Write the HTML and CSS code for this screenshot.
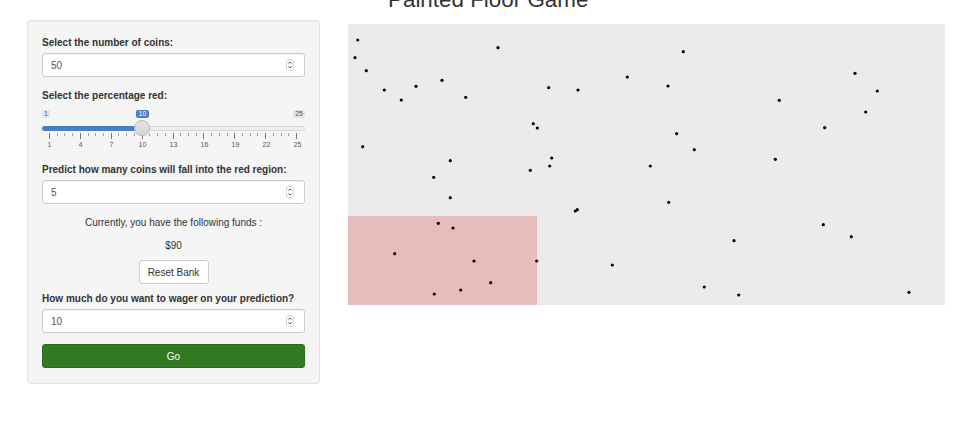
FILE: index.html
```html
<!DOCTYPE html>
<html lang="en">
<head>
<meta charset="utf-8">
<title>Painted Floor Game</title>
<link rel="stylesheet" href="styles.css">
</head>
<body>
<div class="page">
  <aside class="panel">
    <div class="group">
      <label class="lbl">Select the number of coins:</label>
      <div class="num"><span>50</span>
        <svg class="spin" width="8" height="12" viewBox="0 0 8 12"><rect x="0.5" y="0.5" width="7" height="11" rx="2" fill="#fbfbfb" stroke="#d6d6d6"/><path d="M2.3 4.6 L4 3 L5.7 4.6" fill="none" stroke="#555" stroke-width="0.9"/><path d="M2.3 7.4 L4 9 L5.7 7.4" fill="none" stroke="#555" stroke-width="0.9"/></svg>
      </div>
    </div>
    <div class="group">
      <label class="lbl">Select the percentage red:</label>
      <div class="slider">
        <div class="irs-minmax"><span class="irs-box">1</span><span class="irs-box">25</span></div>
        <span class="irs-single">10</span>
        <div class="irs-track"><div class="irs-bar"></div></div>
        <div class="irs-handle"></div>
        <div class="irs-ticks">
          <i class="maj"></i><i></i><i></i><i></i>
          <i class="maj"></i><i></i><i></i><i></i>
          <i class="maj"></i><i></i><i></i><i></i>
          <i class="maj"></i><i></i><i></i><i></i>
          <i class="maj"></i><i></i><i></i><i></i>
          <i class="maj"></i><i></i><i></i><i></i>
          <i class="maj"></i><i></i><i></i><i></i>
          <i class="maj"></i><i></i><i></i><i></i>
          <i class="maj"></i>
        </div>
        <div class="irs-labels"><span>1</span><span>4</span><span>7</span><span>10</span><span>13</span><span>16</span><span>19</span><span>22</span><span>25</span></div>
      </div>
    </div>
    <div class="group">
      <label class="lbl">Predict how many coins will fall into the red region:</label>
      <div class="num"><span>5</span>
        <svg class="spin" width="8" height="12" viewBox="0 0 8 12"><rect x="0.5" y="0.5" width="7" height="11" rx="2" fill="#fbfbfb" stroke="#d6d6d6"/><path d="M2.3 4.6 L4 3 L5.7 4.6" fill="none" stroke="#555" stroke-width="0.9"/><path d="M2.3 7.4 L4 9 L5.7 7.4" fill="none" stroke="#555" stroke-width="0.9"/></svg>
      </div>
    </div>
    <p class="funds">Currently, you have the following funds :</p>
    <p class="amount">$90</p>
    <div class="center"><button class="btn-reset" type="button">Reset Bank</button></div>
    <div class="group wager">
      <label class="lbl">How much do you want to wager on your prediction?</label>
      <div class="num"><span>10</span>
        <svg class="spin" width="8" height="12" viewBox="0 0 8 12"><rect x="0.5" y="0.5" width="7" height="11" rx="2" fill="#fbfbfb" stroke="#d6d6d6"/><path d="M2.3 4.6 L4 3 L5.7 4.6" fill="none" stroke="#555" stroke-width="0.9"/><path d="M2.3 7.4 L4 9 L5.7 7.4" fill="none" stroke="#555" stroke-width="0.9"/></svg>
      </div>
    </div>
    <button class="btn-go" type="button">Go</button>
  </aside>
  <main class="main">
    <h3 class="title">Painted Floor Game</h3>
    <div class="plot">
      <div class="red"></div>
      <svg class="coins" width="597" height="281" viewBox="0 0 597 281">
        <g fill="#000">
          <circle cx="9.7" cy="16" r="1.6"/>
          <circle cx="7" cy="33.7" r="1.6"/>
          <circle cx="18.3" cy="46.7" r="1.6"/>
          <circle cx="36.3" cy="66" r="1.6"/>
          <circle cx="53.3" cy="76" r="1.6"/>
          <circle cx="68" cy="62.3" r="1.6"/>
          <circle cx="94" cy="56.3" r="1.6"/>
          <circle cx="117.7" cy="73.3" r="1.6"/>
          <circle cx="150" cy="23.7" r="1.6"/>
          <circle cx="200.7" cy="63.7" r="1.6"/>
          <circle cx="230" cy="66" r="1.6"/>
          <circle cx="279.3" cy="53" r="1.6"/>
          <circle cx="185.3" cy="99.7" r="1.6"/>
          <circle cx="189.3" cy="104" r="1.6"/>
          <circle cx="14.7" cy="122.7" r="1.6"/>
          <circle cx="102.3" cy="136.7" r="1.6"/>
          <circle cx="203.7" cy="134" r="1.6"/>
          <circle cx="335.3" cy="27.7" r="1.6"/>
          <circle cx="320" cy="62" r="1.6"/>
          <circle cx="431.3" cy="76.3" r="1.6"/>
          <circle cx="507" cy="49.3" r="1.6"/>
          <circle cx="529.3" cy="67" r="1.6"/>
          <circle cx="517.7" cy="88" r="1.6"/>
          <circle cx="476.7" cy="103.7" r="1.6"/>
          <circle cx="328.7" cy="109.7" r="1.6"/>
          <circle cx="346.3" cy="125.7" r="1.6"/>
          <circle cx="427.3" cy="135.3" r="1.6"/>
          <circle cx="182.3" cy="146.3" r="1.6"/>
          <circle cx="201.7" cy="142" r="1.6"/>
          <circle cx="85.7" cy="153.3" r="1.6"/>
          <circle cx="102.3" cy="173.7" r="1.6"/>
          <circle cx="227.3" cy="187" r="1.6"/>
          <circle cx="229.3" cy="185.7" r="1.6"/>
          <circle cx="90.3" cy="199.3" r="1.6"/>
          <circle cx="105" cy="204" r="1.6"/>
          <circle cx="46.7" cy="229.7" r="1.6"/>
          <circle cx="126" cy="237" r="1.6"/>
          <circle cx="188.7" cy="237" r="1.6"/>
          <circle cx="142.7" cy="258.7" r="1.6"/>
          <circle cx="112.7" cy="266" r="1.6"/>
          <circle cx="86.3" cy="270" r="1.6"/>
          <circle cx="264.3" cy="241" r="1.6"/>
          <circle cx="302.3" cy="142" r="1.6"/>
          <circle cx="320.7" cy="178.3" r="1.6"/>
          <circle cx="386" cy="216.7" r="1.6"/>
          <circle cx="475.3" cy="200.7" r="1.6"/>
          <circle cx="503.3" cy="212.7" r="1.6"/>
          <circle cx="356.3" cy="263" r="1.6"/>
          <circle cx="390.7" cy="271" r="1.6"/>
          <circle cx="561" cy="268.3" r="1.6"/>
        </g>
      </svg>
    </div>
  </main>
</div>
</body>
</html>
```

FILE: styles.css
```css
* { box-sizing: border-box; }

body {
  margin: 0;
  background: #fff;
  color: #333;
  font-family: "Liberation Sans", Arial, Helvetica, sans-serif;
}

.page {
  display: flex;
  align-items: flex-start;
  gap: 28px;
  padding-left: 27px;
}

/* ---------- side panel ---------- */
.panel {
  flex: 0 0 293px;
  width: 293px;
  min-width: 0;
  margin-top: 20px;
  background: #f5f5f5;
  border: 1px solid #e3e3e3;
  border-radius: 3px;
  box-shadow: inset 0 1px 1px rgba(0, 0, 0, 0.04);
  padding: 15px 14px 15px;
}

.group { margin-bottom: 12px; }

.lbl {
  display: block;
  font-size: 10px;
  line-height: 14px;
  font-weight: bold;
  margin-bottom: 3px;
  color: #333;
}

.num {
  height: 24px;
  background: #fff;
  border: 1px solid #ccc;
  border-radius: 3px;
  box-shadow: inset 0 1px 1px rgba(0, 0, 0, 0.06);
  display: flex;
  align-items: center;
  justify-content: space-between;
  padding: 0 10px 0 8px;
  font-size: 10px;
  color: #555;
}

.spin { display: block; }

/* ---------- slider ---------- */
.slider {
  position: relative;
  height: 45px;
}

.irs-minmax {
  display: flex;
  justify-content: space-between;
  padding-top: 4px;
  height: 12px;
}

.irs-box {
  font-size: 7px;
  line-height: 8px;
  padding: 0 2px;
  background: #e4e4e4;
  color: #555;
  border-radius: 2px;
}

.irs-single {
  position: absolute;
  left: 94px;
  top: 4px;
  width: 13px;
  text-align: center;
  font-size: 7px;
  line-height: 8px;
  background: #4a80c2;
  color: #fff;
  border-radius: 2px;
}

.irs-track {
  position: relative;
  margin-top: 8px;
  height: 5px;
  background: #eee;
  border: 1px solid #d8d8d8;
  border-radius: 3px;
}

.irs-bar {
  position: absolute;
  left: -1px;
  top: -1px;
  width: 101px;
  height: 5px;
  background: #4a80c2;
  border-radius: 3px 0 0 3px;
}

.irs-handle {
  position: absolute;
  left: 92px;
  top: 14px;
  width: 16px;
  height: 16px;
  border-radius: 50%;
  background: linear-gradient(#e4e4e4, #d6d6d6);
  border: 1px solid #b9b9b9;
}

.irs-ticks {
  display: flex;
  justify-content: space-between;
  align-items: flex-start;
  margin: 2px 0 0 7px;
  width: 248px;
  height: 6px;
}

.irs-ticks i {
  display: block;
  width: 1px;
  height: 3px;
  background: #a4a4a4;
}

.irs-ticks i.maj {
  height: 6px;
  background: #777;
}

.irs-labels {
  display: flex;
  margin: 1px 0 0 -8px;
  width: 279px;
}

.irs-labels span {
  flex: 1;
  text-align: center;
  font-size: 7px;
  line-height: 9px;
  color: #555;
}

/* ---------- text + buttons ---------- */
.funds, .amount {
  margin: 0;
  text-align: center;
  font-size: 10px;
  line-height: 14px;
  color: #333;
}

.amount { margin-top: 9px; }

.center {
  display: flex;
  justify-content: center;
  margin-top: 7px;
}

.btn-reset {
  width: 70px;
  height: 24px;
  background: #fff;
  border: 1px solid #ccc;
  border-radius: 3px;
  font-family: inherit;
  font-size: 10px;
  color: #333;
  padding: 0;
}

.wager { margin-top: 8px; margin-bottom: 11px; }
.wager .lbl { margin-bottom: 3px; }

.btn-go {
  display: block;
  width: 100%;
  height: 24px;
  background: #317a21;
  border: 1px solid #2a6c1c;
  border-radius: 3px;
  color: #fff;
  font-family: inherit;
  font-size: 10px;
  padding: 0;
}

/* ---------- plot ---------- */
.main { flex: 0 0 597px; }

.title {
  margin: -11px 0 13px;
  padding-left: 40px;
  font-size: 22.4px;
  line-height: 22px;
  font-weight: normal;
  color: #333;
}

.plot {
  position: relative;
  width: 597px;
  height: 281px;
  background: #ebebeb;
}

.red {
  position: absolute;
  left: 0;
  bottom: 0;
  width: 189px;
  height: 89px;
  background: #e7bcbc;
}

.coins {
  position: absolute;
  left: 0;
  top: 0;
}
```
